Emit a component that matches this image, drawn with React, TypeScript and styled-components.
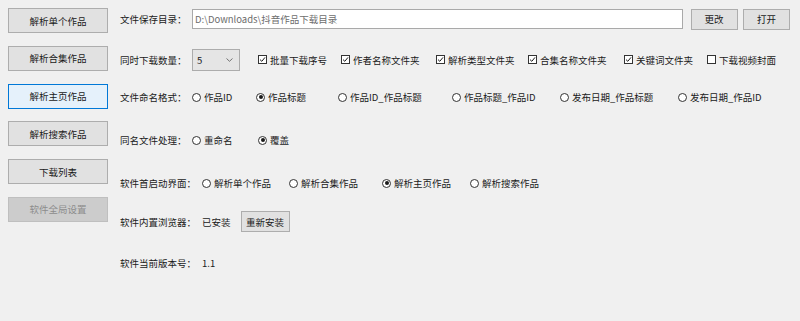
import styled, { createGlobalStyle } from 'styled-components';

const GlobalStyle = createGlobalStyle`
  html, body {
    margin: 0;
    padding: 0;
    background: #f0f0f0;
  }
  body {
    font-family: "Noto Sans CJK SC", "Noto Sans", sans-serif;
    font-size: 9.5px;
    color: #1a1a1a;
  }
`;

const Window = styled.div`
  display: flex;
  width: 800px;
  height: 321px;
  background: #f0f0f0;
  overflow: hidden;
`;

const Sidebar = styled.nav`
  display: flex;
  flex-direction: column;
  gap: 12.8px;
  box-sizing: border-box;
  width: 120px;
  padding: 8px 0 0 8px;
`;

type NavState = 'normal' | 'active' | 'disabled';

const NavButton = styled.button<{ $state?: NavState }>`
  box-sizing: border-box;
  width: 100px;
  height: 25px;
  padding: 0;
  font: inherit;
  font-size: 9.5px;
  color: ${p => (p.$state === 'disabled' ? '#8c8c8c' : '#1a1a1a')};
  background: ${p =>
    p.$state === 'active' ? '#e5f1fb' : p.$state === 'disabled' ? '#cccccc' : '#e1e1e1'};
  border: 1px solid
    ${p => (p.$state === 'active' ? '#0078d7' : p.$state === 'disabled' ? '#bfbfbf' : '#adadad')};
`;

const Panel = styled.main`
  flex: 1;
  display: flex;
  flex-direction: column;
  padding: 8px 10px 0 0;
`;

const Row = styled.div<{ $top?: number }>`
  display: flex;
  align-items: center;
  height: 22px;
  margin-top: ${p => p.$top ?? 0}px;
`;

const Label = styled.span<{ $wide?: boolean }>`
  flex: none;
  width: ${p => (p.$wide ? 82 : 72)}px;
  white-space: nowrap;
`;

const PathInput = styled.input`
  box-sizing: border-box;
  width: 491px;
  height: 20px;
  padding: 0 2px;
  font: inherit;
  font-size: 9.5px;
  color: #6d6d6d;
  background: #fff;
  border: 1px solid #a9a9a9;
  outline: none;
`;

const SmallButton = styled.button<{ $w?: number; $ml?: number }>`
  box-sizing: border-box;
  width: ${p => p.$w ?? 47}px;
  height: 21px;
  margin-left: ${p => p.$ml ?? 0}px;
  padding: 0;
  font: inherit;
  font-size: 9.5px;
  color: #1a1a1a;
  background: #e1e1e1;
  border: 1px solid #adadad;
`;

const Combo = styled.div`
  box-sizing: border-box;
  display: flex;
  align-items: center;
  justify-content: space-between;
  width: 48px;
  height: 22px;
  padding: 0 6px 0 4px;
  background: #e5e5e5;
  border: 1px solid #acacac;
`;

const Options = styled.div<{ $cols: string; $ml?: number }>`
  display: grid;
  grid-template-columns: ${p => p.$cols};
  align-items: center;
  margin-left: ${p => p.$ml ?? 0}px;
`;

const Option = styled.label`
  display: flex;
  align-items: center;
  gap: 3px;
  white-space: nowrap;
`;

const Mark = styled.span<{ $round?: boolean }>`
  box-sizing: border-box;
  display: inline-flex;
  align-items: center;
  justify-content: center;
  width: 9px;
  height: 9px;
  border: 1px solid #333;
  border-radius: ${p => (p.$round ? '50%' : '0')};
  background: #fff;
`;

const Dot = styled.span`
  width: 4px;
  height: 4px;
  border-radius: 50%;
  background: #1a1a1a;
`;

const Value = styled.span<{ $mr?: number }>`
  margin-right: ${p => p.$mr ?? 0}px;
`;

const Check = ({ on, children }: { on?: boolean; children: string }) => (
  <Option>
    <Mark>
      {on && (
        <svg width="7" height="7" viewBox="0 0 7 7">
          <path d="M1 3.6 L2.8 5.3 L6 1.4" fill="none" stroke="#1a1a1a" strokeWidth="1" />
        </svg>
      )}
    </Mark>
    {children}
  </Option>
);

const Radio = ({ on, children }: { on?: boolean; children: string }) => (
  <Option>
    <Mark $round>{on && <Dot />}</Mark>
    {children}
  </Option>
);

export default function App() {
  return (
    <>
      <GlobalStyle />
      <Window>
        <Sidebar>
          <NavButton>解析单个作品</NavButton>
          <NavButton>解析合集作品</NavButton>
          <NavButton $state="active">解析主页作品</NavButton>
          <NavButton>解析搜索作品</NavButton>
          <NavButton>下载列表</NavButton>
          <NavButton $state="disabled" disabled>
            软件全局设置
          </NavButton>
        </Sidebar>

        <Panel>
          <Row>
            <Label>文件保存目录：</Label>
            <PathInput readOnly value="D:\Downloads\抖音作品下载目录" />
            <SmallButton $ml={7.5}>更改</SmallButton>
            <SmallButton $ml={5.5}>打开</SmallButton>
          </Row>

          <Row $top={18.5}>
            <Label>同时下载数量：</Label>
            <Combo>
              <span>5</span>
              <svg width="7" height="4" viewBox="0 0 7 4">
                <path d="M0.5 0.5 L3.5 3.3 L6.5 0.5" fill="none" stroke="#666" strokeWidth="0.9" />
              </svg>
            </Combo>
            <Options $ml={18} $cols="83px 95px 92px 96px 83px auto">
              <Check on>批量下载序号</Check>
              <Check on>作者名称文件夹</Check>
              <Check on>解析类型文件夹</Check>
              <Check on>合集名称文件夹</Check>
              <Check on>关键词文件夹</Check>
              <Check>下载视频封面</Check>
            </Options>
          </Row>

          <Row $top={15.5}>
            <Label>文件命名格式：</Label>
            <Options $cols="64px 82px 114px 108px 118px auto">
              <Radio>作品ID</Radio>
              <Radio on>作品标题</Radio>
              <Radio>作品ID_作品标题</Radio>
              <Radio>作品标题_作品ID</Radio>
              <Radio>发布日期_作品标题</Radio>
              <Radio>发布日期_作品ID</Radio>
            </Options>
          </Row>

          <Row $top={21}>
            <Label>同名文件处理：</Label>
            <Options $cols="66px auto">
              <Radio>重命名</Radio>
              <Radio on>覆盖</Radio>
            </Options>
          </Row>

          <Row $top={21}>
            <Label $wide>软件首启动界面：</Label>
            <Options $cols="87px 93px 88px auto">
              <Radio>解析单个作品</Radio>
              <Radio>解析合集作品</Radio>
              <Radio on>解析主页作品</Radio>
              <Radio>解析搜索作品</Radio>
            </Options>
          </Row>

          <Row $top={16.5}>
            <Label $wide>软件内置浏览器：</Label>
            <Value $mr={10}>已安装</Value>
            <SmallButton $w={49}>重新安装</SmallButton>
          </Row>

          <Row $top={19.5}>
            <Label $wide>软件当前版本号：</Label>
            <Value>1.1</Value>
          </Row>
        </Panel>
      </Window>
    </>
  );
}
